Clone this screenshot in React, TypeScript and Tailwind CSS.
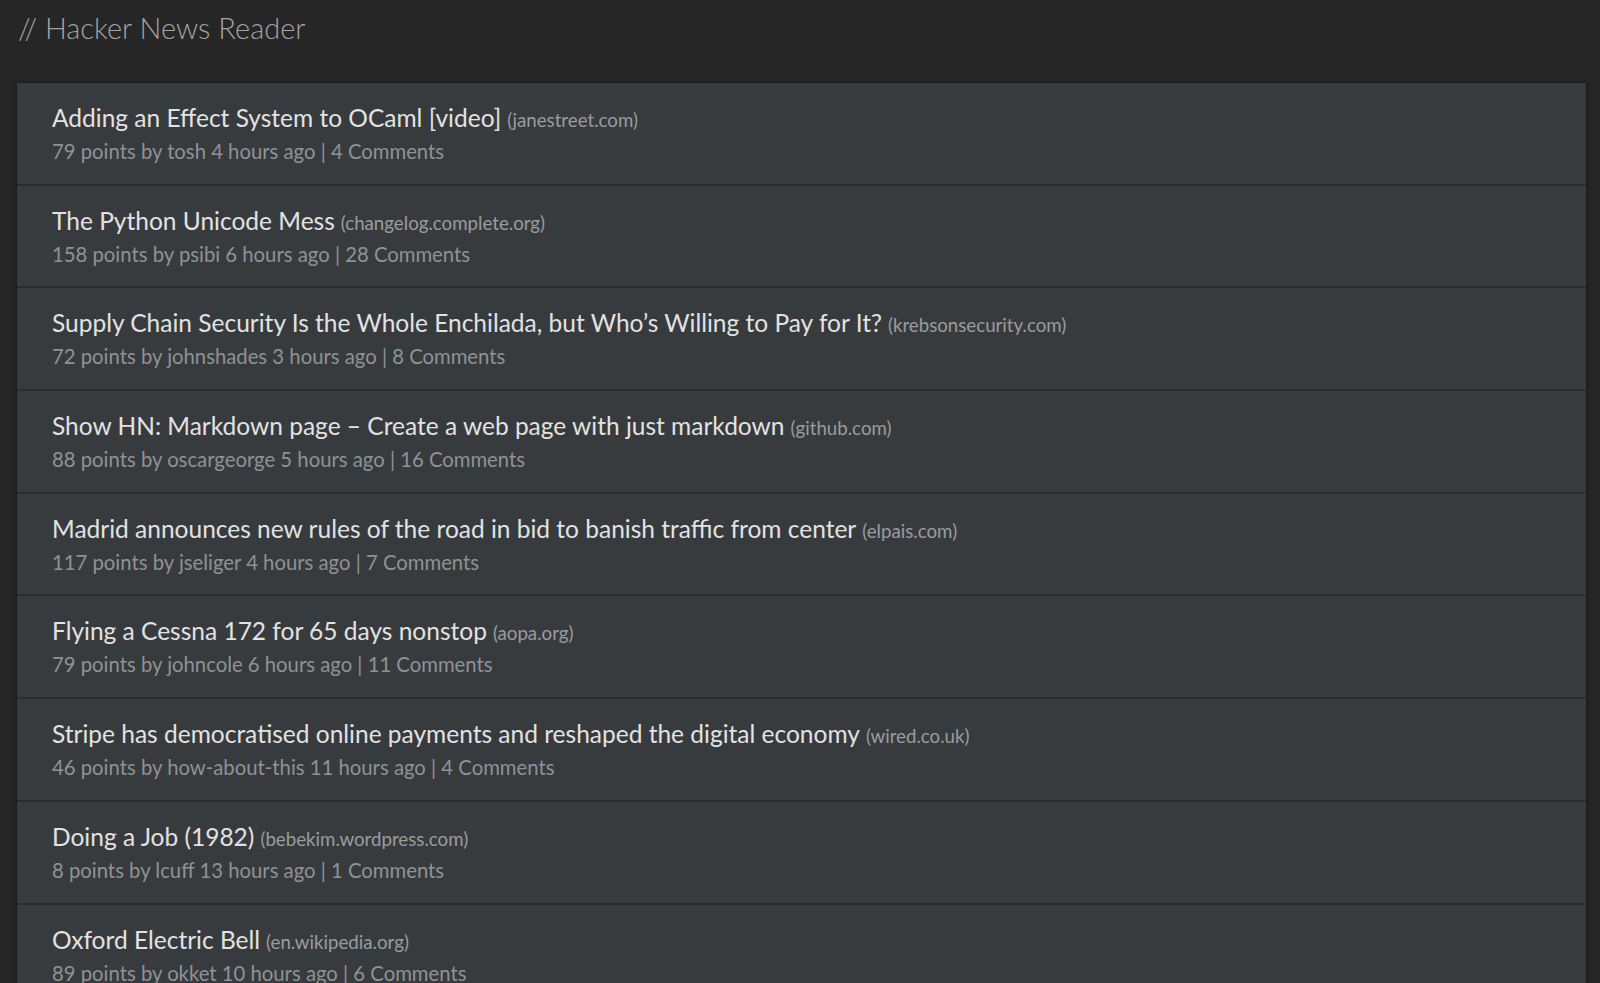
import React from "react";

type Story = { title: string; domain: string; points: number; by: string; ago: string; comments: number };

const stories: Story[] = [
  { title: "Adding an Effect System to OCaml [video]", domain: "janestreet.com", points: 79, by: "tosh", ago: "4 hours ago", comments: 4 },
  { title: "The Python Unicode Mess", domain: "changelog.complete.org", points: 158, by: "psibi", ago: "6 hours ago", comments: 28 },
  { title: "Supply Chain Security Is the Whole Enchilada, but Who\u2019s Willing to Pay for It?", domain: "krebsonsecurity.com", points: 72, by: "johnshades", ago: "3 hours ago", comments: 8 },
  { title: "Show HN: Markdown page \u2013 Create a web page with just markdown", domain: "github.com", points: 88, by: "oscargeorge", ago: "5 hours ago", comments: 16 },
  { title: "Madrid announces new rules of the road in bid to banish traffic from center", domain: "elpais.com", points: 117, by: "jseliger", ago: "4 hours ago", comments: 7 },
  { title: "Flying a Cessna 172 for 65 days nonstop", domain: "aopa.org", points: 79, by: "johncole", ago: "6 hours ago", comments: 11 },
  { title: "Stripe has democratised online payments and reshaped the digital economy", domain: "wired.co.uk", points: 46, by: "how-about-this", ago: "11 hours ago", comments: 4 },
  { title: "Doing a Job (1982)", domain: "bebekim.wordpress.com", points: 8, by: "lcuff", ago: "13 hours ago", comments: 1 },
  { title: "Oxford Electric Bell", domain: "en.wikipedia.org", points: 89, by: "okket", ago: "10 hours ago", comments: 6 },
];

export default function App() {
  return (
    <div className="bg-[#262626] font-['Lato','Open_Sans',sans-serif] overflow-hidden h-[983px]">
      <div className="h-[83px] pl-[18px] pt-[8px]">
        <h1 className="text-[29px] font-light text-[#a3a3a3] leading-[40px]">// Hacker News Reader</h1>
      </div>
      <div className="ml-[17px] mr-[14px] bg-[#383b3e] shadow-[0_0_4px_rgba(0,0,0,0.6)]">
        {stories.map((s, i) => (
          <div key={i} className="h-[102.7px] border-b-2 border-[#2a2d30] pl-[35px] pt-[20px]">
            <div className="leading-[30px] whitespace-nowrap">
              <span className="text-[24.5px] text-[#e2e2e2]">{s.title}</span>
              <span className="ml-[6px] text-[18.7px] text-[#9a9c9e]">({s.domain})</span>
            </div>
            <div className="mt-[2px] leading-[26px] text-[20.3px] text-[#8f9294] whitespace-nowrap">
              {s.points} points by {s.by} {s.ago} | {s.comments} Comments
            </div>
          </div>
        ))}
      </div>
    </div>
  );
}
